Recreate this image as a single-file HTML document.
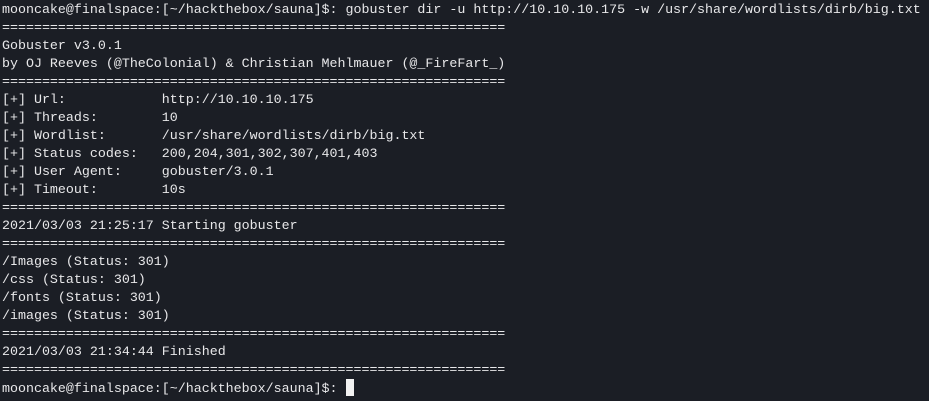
<!DOCTYPE html>
<html><head><meta charset="utf-8"><style>
html,body{margin:0;padding:0;background:#1b1e25;width:929px;height:401px;overflow:hidden}
pre{margin:0;padding:1px 0 0 2px;font-family:"Liberation Mono",monospace;font-size:13.32px;line-height:18px;color:#e8e8ea;white-space:pre}
.cur{display:inline-block;width:8px;height:17px;background:#f2f2f2;vertical-align:-4px}
</style></head><body><pre>mooncake@finalspace:[~/hackthebox/sauna]$: gobuster dir -u http://10.10.10.175 -w /usr/share/wordlists/dirb/big.txt
===============================================================
Gobuster v3.0.1
by OJ Reeves (@TheColonial) &amp; Christian Mehlmauer (@_FireFart_)
===============================================================
[+] Url:            http://10.10.10.175
[+] Threads:        10
[+] Wordlist:       /usr/share/wordlists/dirb/big.txt
[+] Status codes:   200,204,301,302,307,401,403
[+] User Agent:     gobuster/3.0.1
[+] Timeout:        10s
===============================================================
2021/03/03 21:25:17 Starting gobuster
===============================================================
/Images (Status: 301)
/css (Status: 301)
/fonts (Status: 301)
/images (Status: 301)
===============================================================
2021/03/03 21:34:44 Finished
===============================================================
mooncake@finalspace:[~/hackthebox/sauna]$: <span class="cur"></span></pre></body></html>
